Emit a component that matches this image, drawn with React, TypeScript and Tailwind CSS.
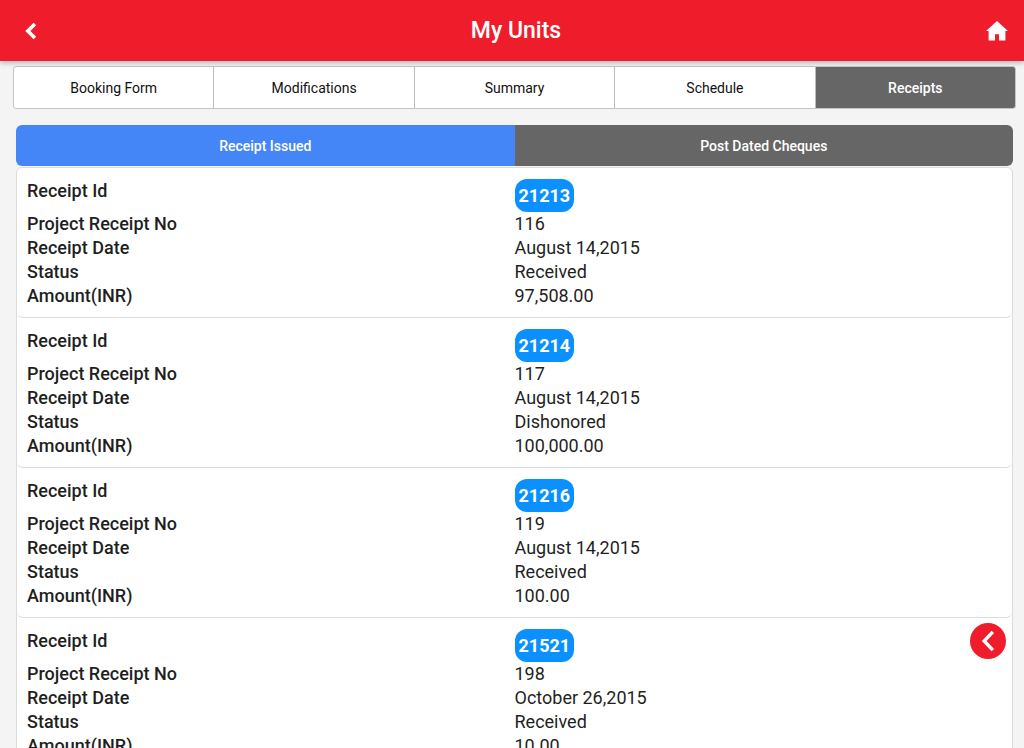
interface Receipt {
  id: string;
  projectNo: string;
  date: string;
  status: string;
  amount: string;
}

const tabs = ['Booking Form', 'Modifications', 'Summary', 'Schedule', 'Receipts'];

const receipts: Receipt[] = [
  { id: '21213', projectNo: '116', date: 'August 14,2015', status: 'Received', amount: '97,508.00' },
  { id: '21214', projectNo: '117', date: 'August 14,2015', status: 'Dishonored', amount: '100,000.00' },
  { id: '21216', projectNo: '119', date: 'August 14,2015', status: 'Received', amount: '100.00' },
  { id: '21521', projectNo: '198', date: 'October 26,2015', status: 'Received', amount: '10.00' },
];

const Header = () => (
  <header className="relative z-10 flex h-[61px] shrink-0 items-center justify-between bg-[#ef1d2b] px-[11px] text-white shadow-[0_2px_5px_rgba(0,0,0,0.26)]">
    <button type="button" aria-label="Back" className="flex h-10 w-10 items-center justify-center">
      <svg width="12" height="18" viewBox="0 0 12 18" fill="none" stroke="currentColor" strokeWidth="3.6">
        <path d="M9.9 2 2.8 9l7.1 7" />
      </svg>
    </button>
    <h1 className="text-[23px] leading-[61px] font-medium">My Units</h1>
    <a href="#home" aria-label="Home" className="flex h-10 w-8 items-center justify-center">
      <svg width="22" height="20" viewBox="0 0 22 20" fill="currentColor">
        <path d="M11 0 0 10h2.6v9.4H9v-6.2h4v6.2h6.4V10H22z" />
      </svg>
    </a>
  </header>
);

const Tabs = () => (
  <nav className="mr-2 ml-[13px] flex h-[43px] overflow-hidden rounded-[3px] border border-[#c4c4c4] bg-white text-sm">
    {tabs.map((tab) => (
      <button
        key={tab}
        type="button"
        className={
          tab === 'Receipts'
            ? 'flex-1 bg-[#666666] pt-px font-medium text-white'
            : 'flex-1 border-r border-[#bdbdbd] pt-px text-[#111111]'
        }
      >
        {tab}
      </button>
    ))}
  </nav>
);

const ReceiptItem = ({ receipt }: { receipt: Receipt }) => {
  const rows = [
    ['Project Receipt No', receipt.projectNo],
    ['Receipt Date', receipt.date],
    ['Status', receipt.status],
    ['Amount(INR)', receipt.amount],
  ];

  return (
    <li className="rounded-md border-b border-[#dcdcdc] px-[10px] pt-[11px] pb-[9px]">
      <dl>
        <div className="grid h-[33px] grid-cols-2">
          <dt className="font-medium">Receipt Id</dt>
          <dd>
            <span className="inline-block rounded-xl bg-[#0a91ff] px-1 leading-[33px] font-bold text-white">
              {receipt.id}
            </span>
          </dd>
        </div>
        {rows.map(([label, value]) => (
          <div key={label} className="grid grid-cols-2">
            <dt className="font-medium">{label}</dt>
            <dd>{value}</dd>
          </div>
        ))}
      </dl>
    </li>
  );
};

const App = () => {
  return (
    <div className="flex h-screen flex-col bg-[#f4f4f4] font-[Roboto,sans-serif] text-[#1f1f1f]">
      <Header />
      <main className="min-h-0 flex-1 overflow-y-auto pt-[5px] [scrollbar-width:none]">
        <Tabs />

        <section className="mr-[11px] ml-4 pt-4">
          <div className="flex h-[41px] overflow-hidden rounded-md text-sm font-medium text-white">
            <button type="button" className="flex-1 bg-[#4486f8]">
              Receipt Issued
            </button>
            <button type="button" className="flex-1 bg-[#666666]">
              Post Dated Cheques
            </button>
          </div>

          <ul className="mt-px rounded-md border border-[#dcdcdc] bg-white text-lg leading-6">
            {receipts.map((receipt) => (
              <ReceiptItem key={receipt.id} receipt={receipt} />
            ))}
          </ul>
        </section>
      </main>

      {/* Floating menu toggle */}
      <button
        type="button"
        aria-label="Open menu"
        className="fixed right-[18px] bottom-[89px] flex h-9 w-9 items-center justify-center rounded-full bg-[#ef1d2b] text-white"
      >
        <svg width="14" height="22" viewBox="0 0 14 22" fill="none" stroke="currentColor" strokeWidth="3.4">
          <path d="M11.8 1.8 3.2 11l8.6 9.2" />
        </svg>
      </button>
    </div>
  );
};

export default App;
